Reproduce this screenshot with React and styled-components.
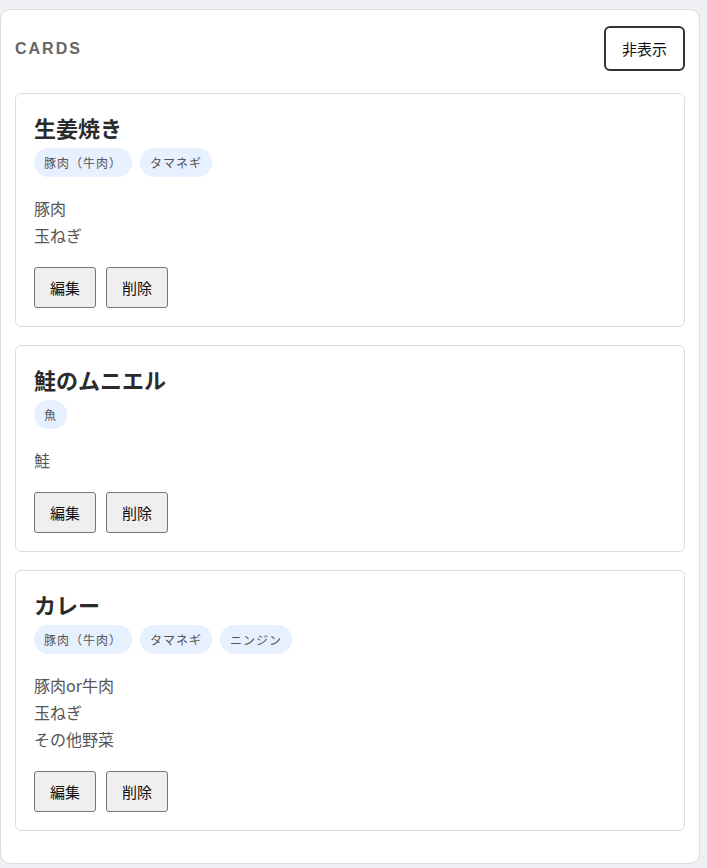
import React from "react";
import styled, { createGlobalStyle } from "styled-components";

const GlobalStyle = createGlobalStyle`
  html, body { margin: 0; padding: 0; background: #eff0f3; }
  body { font-family: "Noto Sans CJK JP", "Noto Sans", sans-serif; }
  * { box-sizing: border-box; }
`;

const Page = styled.div`
  padding-top: 9px;
  min-height: 868px;
`;

const Panel = styled.section`
  width: 700px;
  background: #fff;
  border: 1px solid #dcdde0;
  border-radius: 10px;
  padding: 16px 14px 32px 14px;
`;

const Header = styled.header`
  display: flex;
  align-items: center;
  justify-content: space-between;
  margin-bottom: 22px;
`;

const Heading = styled.h2`
  margin: 0;
  font-family: "Liberation Sans", Arial, sans-serif;
  font-size: 16px;
  font-weight: 700;
  letter-spacing: 2px;
  color: #666;
`;

const ToggleButton = styled.button`
  height: 45px;
  padding: 0 16px;
  background: #fff;
  border: 2px solid #333;
  border-radius: 6px;
  font-family: "Noto Sans CJK JP", sans-serif;
  font-size: 15px;
  color: #111;
`;

const List = styled.div`
  display: flex;
  flex-direction: column;
  gap: 18px;
`;

const Card = styled.article`
  border: 1px solid #dcdcdc;
  border-radius: 6px;
  padding: 18px;
`;

const Title = styled.h3`
  margin: 0 0 6px;
  font-size: 22px;
  line-height: 30px;
  font-weight: 700;
  color: #2b2b2b;
`;

const Tags = styled.div`
  display: flex;
  gap: 8px;
`;

const Tag = styled.span`
  height: 29px;
  display: inline-flex;
  align-items: center;
  padding: 0 10px;
  border-radius: 15px;
  background: #e7f0fe;
  color: #555;
  font-size: 12px;
  letter-spacing: 1px;
`;

const Desc = styled.div`
  margin-top: 18px;
  font-size: 16px;
  line-height: 27px;
  color: #555;
`;

const Actions = styled.div`
  display: flex;
  gap: 10px;
  margin-top: 18px;
`;

const ActionButton = styled.button`
  height: 41px;
  padding: 0 15px;
  background: #efefef;
  border: 1px solid #767676;
  border-radius: 3px;
  font-family: "Noto Sans CJK JP", sans-serif;
  font-size: 15px;
  color: #111;
`;

const recipes = [
  { name: "生姜焼き", tags: ["豚肉（牛肉）", "タマネギ"], lines: ["豚肉", "玉ねぎ"] },
  { name: "鮭のムニエル", tags: ["魚"], lines: ["鮭"] },
  {
    name: "カレー",
    tags: ["豚肉（牛肉）", "タマネギ", "ニンジン"],
    lines: ["豚肉or牛肉", "玉ねぎ", "その他野菜"],
  },
];

export default function App() {
  return (
    <Page>
      <GlobalStyle />
      <Panel>
        <Header>
          <Heading>CARDS</Heading>
          <ToggleButton>非表示</ToggleButton>
        </Header>
        <List>
          {recipes.map((r) => (
            <Card key={r.name}>
              <Title>{r.name}</Title>
              <Tags>
                {r.tags.map((t) => (
                  <Tag key={t}>{t}</Tag>
                ))}
              </Tags>
              <Desc>
                {r.lines.map((l) => (
                  <div key={l}>{l}</div>
                ))}
              </Desc>
              <Actions>
                <ActionButton>編集</ActionButton>
                <ActionButton>削除</ActionButton>
              </Actions>
            </Card>
          ))}
        </List>
      </Panel>
    </Page>
  );
}
